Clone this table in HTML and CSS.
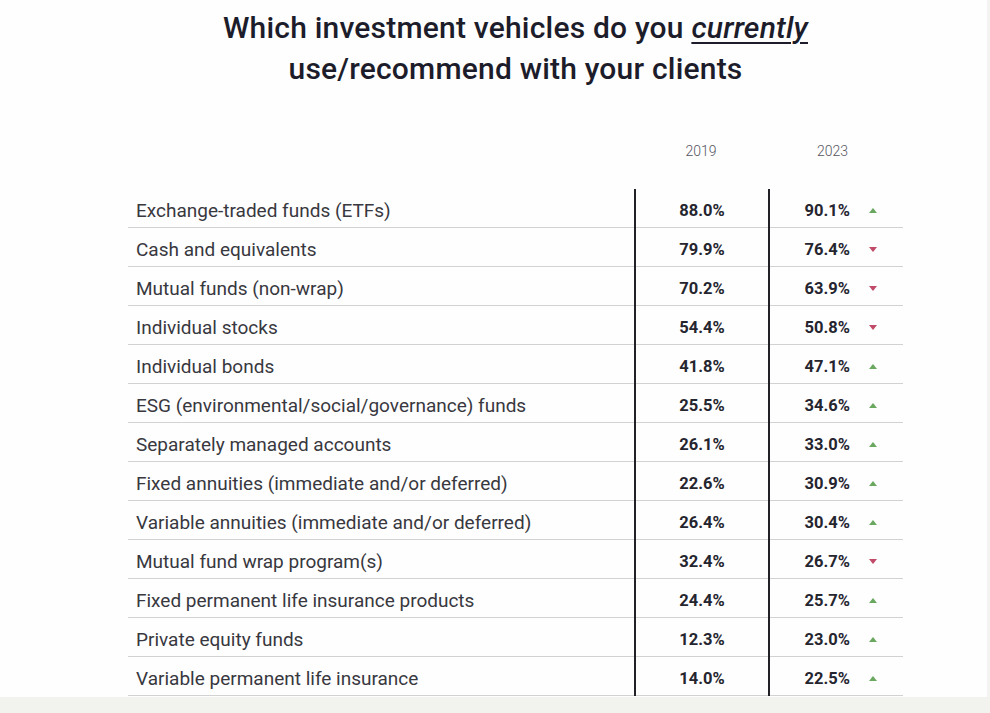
FILE: index.html
```html
<!DOCTYPE html>
<html lang="en">
<head>
<meta charset="utf-8">
<title>Investment vehicles</title>
<link rel="stylesheet" href="styles.css">
</head>
<body>
<div class="page">
  <div class="sheet">
    <h1 class="title">Which investment vehicles do you <em>currently</em><br>use/recommend with your clients</h1>
    <div class="years">
      <span class="year-spacer"></span>
      <span class="year">2019</span>
      <span class="year year-b">2023</span>
    </div>
    <div class="table">
      <div class="row"><span class="label">Exchange-traded funds (ETFs)</span><span class="v1">88.0%</span><span class="v2"><span class="num">90.1%</span><span class="tri up"></span></span></div>
      <div class="row"><span class="label">Cash and equivalents</span><span class="v1">79.9%</span><span class="v2"><span class="num">76.4%</span><span class="tri down"></span></span></div>
      <div class="row"><span class="label">Mutual funds (non-wrap)</span><span class="v1">70.2%</span><span class="v2"><span class="num">63.9%</span><span class="tri down"></span></span></div>
      <div class="row"><span class="label">Individual stocks</span><span class="v1">54.4%</span><span class="v2"><span class="num">50.8%</span><span class="tri down"></span></span></div>
      <div class="row"><span class="label">Individual bonds</span><span class="v1">41.8%</span><span class="v2"><span class="num">47.1%</span><span class="tri up"></span></span></div>
      <div class="row"><span class="label">ESG (environmental/social/governance) funds</span><span class="v1">25.5%</span><span class="v2"><span class="num">34.6%</span><span class="tri up"></span></span></div>
      <div class="row"><span class="label">Separately managed accounts</span><span class="v1">26.1%</span><span class="v2"><span class="num">33.0%</span><span class="tri up"></span></span></div>
      <div class="row"><span class="label">Fixed annuities (immediate and/or deferred)</span><span class="v1">22.6%</span><span class="v2"><span class="num">30.9%</span><span class="tri up"></span></span></div>
      <div class="row"><span class="label">Variable annuities (immediate and/or deferred)</span><span class="v1">26.4%</span><span class="v2"><span class="num">30.4%</span><span class="tri up"></span></span></div>
      <div class="row"><span class="label">Mutual fund wrap program(s)</span><span class="v1">32.4%</span><span class="v2"><span class="num">26.7%</span><span class="tri down"></span></span></div>
      <div class="row"><span class="label">Fixed permanent life insurance products</span><span class="v1">24.4%</span><span class="v2"><span class="num">25.7%</span><span class="tri up"></span></span></div>
      <div class="row"><span class="label">Private equity funds</span><span class="v1">12.3%</span><span class="v2"><span class="num">23.0%</span><span class="tri up"></span></span></div>
      <div class="row"><span class="label">Variable permanent life insurance</span><span class="v1">14.0%</span><span class="v2"><span class="num">22.5%</span><span class="tri up"></span></span></div>
    </div>
  </div>
  <div class="edge"></div>
</div>
<div class="footer-strip"></div>
</body>
</html>
```
FILE: styles.css
```css
* { box-sizing: border-box; }
html, body { margin: 0; padding: 0; }
body {
  width: 990px;
  height: 713px;
  overflow: hidden;
  background: #ffffff;
  font-family: Roboto, "Liberation Sans", sans-serif;
  color: #2b2b33;
}
.page {
  display: flex;
  height: 697px;
  background: #fefefe;
}
.sheet {
  margin-left: 128px;
  width: 775px;
  display: flex;
  flex-direction: column;
}
.edge {
  margin-left: auto;
  width: 3px;
  background: #f3f3f1;
}
.title {
  margin: 0;
  padding-top: 7px;
  font-size: 30px;
  line-height: 41px;
  font-weight: 500;
  text-align: center;
  color: #1c1c2a;
  letter-spacing: 0.2px;
}
.title em {
  font-style: italic;
  text-decoration: underline;
  text-decoration-thickness: 2px;
  text-underline-offset: 4px;
}
.years {
  display: grid;
  grid-template-columns: 506px 134px 135px;
  margin-top: 53px;
  height: 18px;
  font-size: 14px;
  line-height: 18px;
  color: #555560;
  font-weight: 300;
}
.year { text-align: center; }
.year-b { padding-right: 6px; }
.table {
  margin-top: 29px;
  display: flex;
  flex-direction: column;
}
.row {
  display: grid;
  grid-template-columns: 506px 134px 135px;
  height: 39px;
  border-bottom: 1px solid #d2d2d2;
}
.label {
  display: flex;
  align-items: center;
  padding-left: 8px;
  padding-top: 5px;
  font-size: 19px;
  color: #38383e;
  white-space: nowrap;
}
.v1, .v2 {
  display: flex;
  align-items: center;
  padding-top: 3px;
  font-size: 16.5px;
  font-weight: 700;
  color: #25252f;
  border-left: 2px solid #222226;
  margin-bottom: -1px;
}
.v1 { justify-content: center; }
.v2 { justify-content: flex-end; padding-right: 26px; }
.num { margin-right: 19px; }
.tri {
  width: 0;
  height: 0;
  border-left: 4px solid transparent;
  border-right: 4px solid transparent;
}
.tri.up { border-bottom: 5px solid #6aa860; }
.tri.down { border-top: 5px solid #c04a68; }
.footer-strip {
  height: 16px;
  background: #f2f2ef;
}
```
